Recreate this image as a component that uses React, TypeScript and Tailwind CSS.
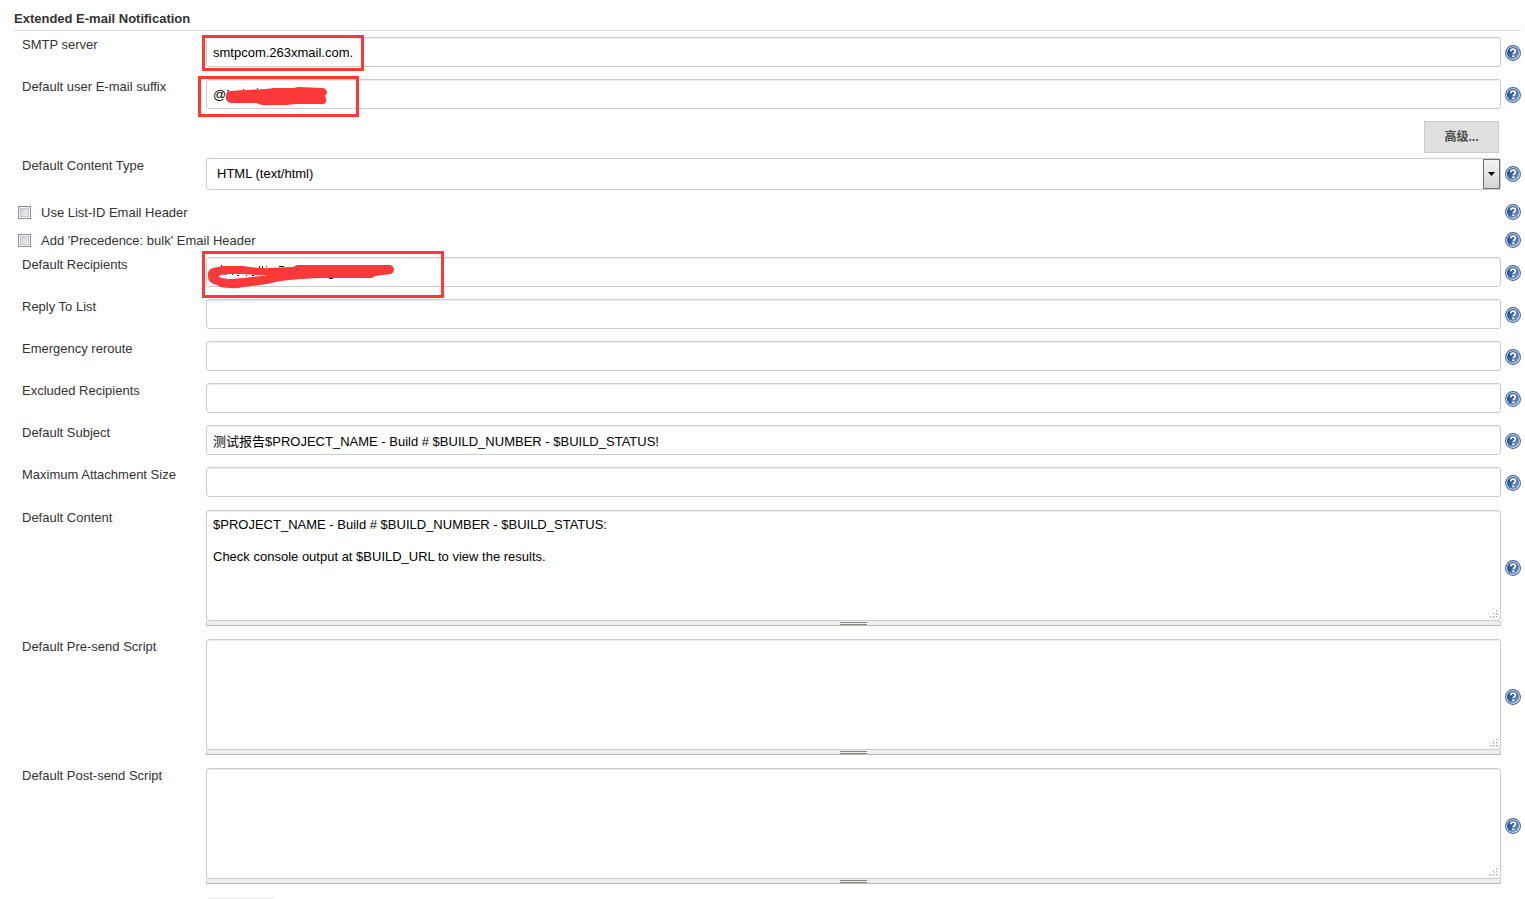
import { useId, useState } from 'react';
import type { ReactNode } from 'react';

/* ──────────────────────────────────────────────
   Help icon
   ────────────────────────────────────────────── */
function HelpLink({ topic }: { topic: string }) {
  const gradient = useId();

  return (
    <a href="#help" aria-label={`Help for feature: ${topic}`} className="block size-4 shrink-0">
      <svg viewBox="0 0 16 16" className="block size-4">
        <defs>
          <linearGradient id={gradient} x1="0" y1="0" x2="1" y2="1">
            <stop offset="0" stopColor="#1f4787" />
            <stop offset="0.5" stopColor="#3a65a3" />
            <stop offset="1" stopColor="#94b4da" />
          </linearGradient>
        </defs>
        <circle cx="8" cy="8" r="7.4" fill="#fff" stroke="#3c639c" strokeWidth="1.1" />
        <circle cx="8" cy="8" r="6.1" fill={`url(#${gradient})`} />
        <path
          d="M5.8 6.2c0-1.3 1-2 2.3-2s2.3.8 2.3 1.9c0 1.6-2.1 1.6-2.1 3.2"
          fill="none"
          stroke="#fff"
          strokeWidth="1.7"
        />
        <rect x="7.3" y="10.4" width="2" height="1.8" fill="#fff" />
      </svg>
    </a>
  );
}

/* ──────────────────────────────────────────────
   Form rows
   ────────────────────────────────────────────── */
interface RowProps {
  id: string;
  label: string;
  center?: boolean;
  children: ReactNode;
}

function Row({ id, label, center, children }: RowProps) {
  return (
    <div className="flex">
      <label htmlFor={id} className="w-48 shrink-0 pl-2 leading-4">
        {label}
      </label>
      <div className="relative min-w-0 flex-1">{children}</div>
      <div className={`ml-1 flex ${center ? 'items-center' : 'items-start pt-2'}`}>
        <HelpLink topic={label} />
      </div>
    </div>
  );
}

interface FieldProps {
  label: string;
  value?: string;
  children?: ReactNode;
}

function TextRow({ label, value = '', children }: FieldProps) {
  const id = useId();
  const [text, setText] = useState(value);

  return (
    <Row id={id} label={label}>
      <input
        id={id}
        type="text"
        value={text}
        onChange={(e) => setText(e.target.value)}
        className="block h-[30px] w-full rounded-[3px] border border-[#ccc] bg-white px-1.5 leading-4 text-black shadow-[inset_0_1px_1px_rgba(0,0,0,0.075)] outline-none"
      />
      {children}
    </Row>
  );
}

function TextAreaRow({ label, value = '' }: FieldProps) {
  const id = useId();
  const [text, setText] = useState(value);

  return (
    <Row id={id} label={label} center>
      <textarea
        id={id}
        value={text}
        onChange={(e) => setText(e.target.value)}
        className="block h-[111px] w-full resize-none rounded-[3px] border border-[#ccc] bg-white px-1.5 py-1.5 leading-4 text-black shadow-[inset_0_1px_1px_rgba(0,0,0,0.075)] outline-none"
      />
      {/* Resize grip */}
      <svg viewBox="0 0 8 8" fill="#999" className="pointer-events-none absolute right-[3px] bottom-2 size-2">
        <path d="M6 0h1v1h-1zM3 3h1v1h-1zM6 3h1v1h-1zM0 6h1v1h-1zM3 6h1v1h-1zM6 6h1v1h-1z" />
        <path
          d="M7 1h1v1h-1zM4 4h1v1h-1zM7 4h1v1h-1zM1 7h1v1h-1zM4 7h1v1h-1zM7 7h1v1h-1z"
          fill="#ccc"
        />
      </svg>
      {/* Drag handle */}
      <div className="flex h-[5px] flex-col items-center justify-between border-x border-b border-x-[#ccc] border-b-[#b8b8b4] bg-[#eee] pt-px">
        <div className="h-[3px] w-[27px] border-y border-[#888a85]" />
      </div>
    </Row>
  );
}

function CheckboxRow({ label }: { label: string }) {
  const [checked, setChecked] = useState(false);

  return (
    <div className="flex h-7 items-center justify-between">
      <label className="flex items-center gap-2.5 pl-1">
        <input
          type="checkbox"
          checked={checked}
          onChange={(e) => setChecked(e.target.checked)}
          className="size-[13px] appearance-none border border-[#8e8f8f] bg-linear-to-br from-[#c9cdd3] to-[#f4f4f4] shadow-[inset_0_0_0_1px_#f4f4f4,inset_0_0_0_2px_#c4c8cc] checked:bg-[#4b6a9b]"
        />
        <span className="pt-0.5 leading-5">{label}</span>
      </label>
      <HelpLink topic={label} />
    </div>
  );
}

/* ──────────────────────────────────────────────
   Red marker strokes over the private addresses
   ────────────────────────────────────────────── */
function SuffixMarker() {
  return (
    <svg viewBox="0 0 150 30" className="pointer-events-none absolute top-0 left-0 h-[30px] w-[150px]">
      <path d="M21 11h2v1h-2zM37 10h1v1h-1zM51 9h1v1h-1z" fill="#333" />
      <path
        d="M24 12L40 11L60 10L68 9L88 9L92 8L117 9Q121 10 121 14L119 17Q121 20 120 23Q118 26 114 25L90 25L80 26L56 26L50 24L25 24Q19 23 20 17Q20 12 24 12Z"
        fill="#fc3838"
      />
    </svg>
  );
}

function RecipientsMarker() {
  return (
    <svg viewBox="0 0 200 34" className="pointer-events-none absolute top-0 left-0 h-[34px] w-[200px]">
      <path d="M15 8h1v3h-1zM53 9h1v3h-1zM56 9h1v3h-1zM60 9h1v1h-1zM73 9h5v1h-5zM123 20h4v2h-4z" fill="#222" />
      <path
        d="M2 16Q3 12 7 11L17 9L37 9Q48 11 61 11L87 10L91 8L184 8Q188 9 188 13Q187 17 184 17L169 19L166 21L114 21L94 22L74 24L61 27L37 30Q30 32 24 31Q14 31 11 28Q2 26 2 20ZM14 18L13 20Q18 22 26 22L37 21L55 19L62 18L50 18L37 17L24 17Z"
        fill="#fc3838"
        fillRule="evenodd"
      />
      <path d="M19 17h1v1h-1zM26 17h1v1h-1zM31 18h2v1h-2zM40 18h1v1h-1zM46 18h2v1h-2z" fill="#222" />
    </svg>
  );
}

/* ──────────────────────────────────────────────
   Page
   ────────────────────────────────────────────── */
export default function App() {
  return (
    <main className="bg-white pr-1 pl-3.5 font-['Liberation_Sans','Noto_Sans_CJK_SC',sans-serif] text-[13px] text-[#333]">
      <h2 className="border-b border-[#ddd] pt-[9px] pb-px leading-5 font-bold">Extended E-mail Notification</h2>

      <form className="pt-1.5" onSubmit={(e) => e.preventDefault()}>
        <div className="flex flex-col gap-3">
          <TextRow label="SMTP server" value="smtpcom.263xmail.com.">
            <div className="pointer-events-none absolute -top-0.5 -left-1 h-9 w-[162px] border-3 border-[#fc3838]" />
          </TextRow>
          <TextRow label="Default user E-mail suffix" value="@">
            <SuffixMarker />
            <div className="pointer-events-none absolute -top-[3px] -left-2 h-[41px] w-[161px] border-3 border-[#fc3838]" />
          </TextRow>
        </div>

        <div className="flex justify-end pt-3 pr-[22px] pb-[5px]">
          <button
            type="button"
            className="h-8 w-[75px] border border-[#ccc] bg-[#e0e0e0] text-xs font-bold text-[#4d4d4d]"
          >
            高级...
          </button>
        </div>

        <Row id="content-type" label="Default Content Type" center>
          <select
            id="content-type"
            className="block h-8 w-full appearance-none rounded-[3px] border border-[#ccc] bg-white pr-5 pl-2.5 text-black outline-none"
          >
            <option>HTML (text/html)</option>
          </select>
          <div className="pointer-events-none absolute top-px right-px bottom-px flex w-[17px] items-center justify-center border border-[#707070] bg-linear-to-b from-[#f4f4f4] to-[#d4d4d4]">
            <svg viewBox="0 0 7 4" className="h-1 w-[7px]">
              <path d="M0 0h7L3.5 4z" fill="#000" />
            </svg>
          </div>
        </Row>

        <div className="pt-2 pb-[3px]">
          <CheckboxRow label="Use List-ID Email Header" />
          <CheckboxRow label="Add 'Precedence: bulk' Email Header" />
        </div>

        <div className="flex flex-col gap-3">
          <TextRow label="Default Recipients">
            <RecipientsMarker />
            <div className="pointer-events-none absolute -top-1.5 -left-1 h-[47px] w-[242px] border-3 border-[#fc3838]" />
          </TextRow>
          <TextRow label="Reply To List" />
          <TextRow label="Emergency reroute" />
          <TextRow label="Excluded Recipients" />
          <TextRow
            label="Default Subject"
            value="测试报告$PROJECT_NAME - Build # $BUILD_NUMBER - $BUILD_STATUS!"
          />
          <TextRow label="Maximum Attachment Size" />
        </div>

        <div className="flex flex-col gap-[13px] pt-[13px]">
          <TextAreaRow
            label="Default Content"
            value={
              '$PROJECT_NAME - Build # $BUILD_NUMBER - $BUILD_STATUS:\n\nCheck console output at $BUILD_URL to view the results.'
            }
          />
          <TextAreaRow label="Default Pre-send Script" />
          <TextAreaRow label="Default Post-send Script" />
        </div>

        {/* Top edge of the next control */}
        <div className="mt-[13px] ml-[194px] h-0.5 w-[66px] bg-[#f3f3f3]" />
      </form>
    </main>
  );
}
